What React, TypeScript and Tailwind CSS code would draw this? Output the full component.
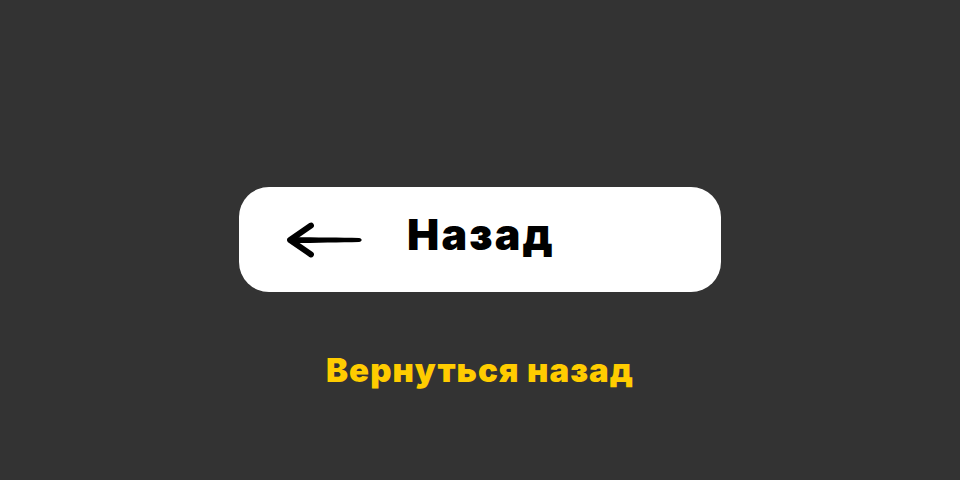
import React from "react";

function BackArrow() {
  return (
    <svg width="80" height="40" viewBox="0 0 80 40" className="shrink-0">
      {/* tapered shaft */}
      <path d="M6 17 C 30 17.4, 55 17.6, 73 17.9 C 76.5 18.2, 76.5 21.6, 73 21.9 C 55 22.3, 30 22.8, 6 23 Z" fill="#000" />
      {/* head */}
      <polyline
        points="25,5.5 4,20 25,34.5"
        fill="none"
        stroke="#000"
        strokeWidth="5.8"
        strokeLinecap="round"
        strokeLinejoin="round"
      />
    </svg>
  );
}

export default function App() {
  return (
    <div className="flex h-[480px] w-[960px] flex-col items-center bg-[#333333] pt-[187px] font-['Inter',sans-serif]">
      <button
        type="button"
        className="flex h-[105px] w-[482px] items-center rounded-[30px] bg-white pl-[47px]"
      >
        <BackArrow />
        <span className="mb-[10px] ml-[41px] text-[43px] font-black leading-none tracking-[2.2px] text-black">
          Назад
        </span>
      </button>
      <p className="mt-[62px] text-[33px] font-black leading-none tracking-[1px] text-[#ffcc00]">
        Вернуться назад
      </p>
    </div>
  );
}
